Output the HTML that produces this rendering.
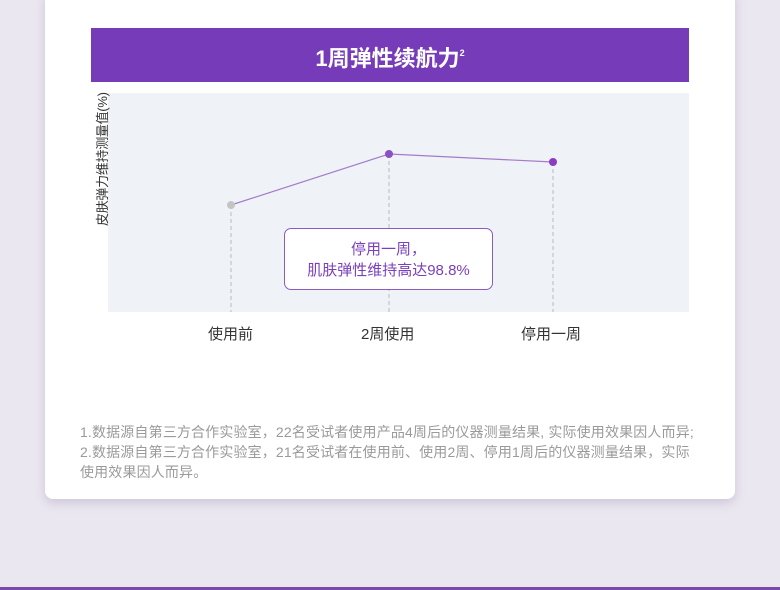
<!DOCTYPE html><html><head><meta charset="utf-8"><style>
body{margin:0;width:780px;height:590px;background:#ebe7f0;position:relative;overflow:hidden;font-family:"Liberation Sans","Noto Sans CJK SC",sans-serif}
.card{position:absolute;left:45px;top:-10px;width:690px;height:509px;background:#fff;border-radius:8px;box-shadow:0 4px 10px rgba(120,100,150,.25)}
.bar{position:absolute;left:91px;top:28px;width:598px;height:54px;background:#763bb8;color:#fff;font-size:22px;font-weight:bold;text-align:center;line-height:50px}
.bar sup{font-size:9px;vertical-align:10px}
.chart{position:absolute;left:108px;top:93px;width:581px;height:219px;background:#eff2f7}
.yl{position:absolute;left:92px;top:226px;transform-origin:0 0;transform:rotate(-90deg);font-size:13px;color:#333;white-space:nowrap;letter-spacing:-0.3px}
.lab{position:absolute;top:323px;font-size:15px;color:#333}
.box{position:absolute;left:284px;top:228px;width:209px;height:62px;border:1px solid #8a5cc2;border-radius:7px;background:#fff;text-align:center;color:#7a3fbd;font-size:15px;line-height:21px;box-sizing:border-box;padding-top:10px}
.fn{position:absolute;left:80px;top:422px;width:640px;font-size:14px;line-height:20px;color:#9a9a9a;letter-spacing:0.15px;white-space:nowrap}
.bot{position:absolute;left:0;top:587px;width:780px;height:3px;background:#7a4aa8}
</style></head><body>
<div class="card"></div>
<div class="bar">1周弹性续航力<sup>2</sup></div>
<div class="chart"></div>
<div class="yl">皮肤弹力维持测量值(%)</div>
<svg style="position:absolute;left:0;top:0" width="780" height="590">
<g stroke="#bbb" stroke-dasharray="4,3" stroke-width="1"><line x1="231" y1="205" x2="231" y2="312"/><line x1="389" y1="154" x2="389" y2="312"/><line x1="553" y1="162" x2="553" y2="312"/></g>
<polyline points="231,205 389,154 553,162" fill="none" stroke="#a57ac9" stroke-width="1.2"/>
<circle cx="231" cy="205" r="4" fill="#c4c4c4"/><circle cx="389" cy="154" r="4" fill="#8a50c4"/><circle cx="553" cy="162" r="4" fill="#8a3cc4"/>
</svg>
<div class="box">停用一周，<br>肌肤弹性维持高达98.8%</div>
<div class="lab" style="left:208px">使用前</div>
<div class="lab" style="left:361px">2周使用</div>
<div class="lab" style="left:521px">停用一周</div>
<div class="fn">1.数据源自第三方合作实验室，22名受试者使用产品4周后的仪器测量结果, 实际使用效果因人而异;<br>2.数据源自第三方合作实验室，21名受试者在使用前、使用2周、停用1周后的仪器测量结果，实际<br>使用效果因人而异。</div>
<div class="bot"></div>
</body></html>
